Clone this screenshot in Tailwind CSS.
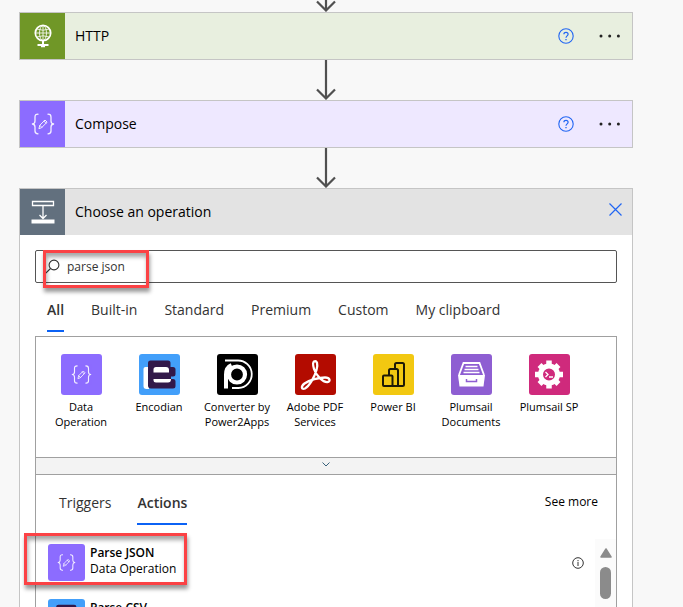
<!DOCTYPE html>
<html lang="en">
<head>
<meta charset="utf-8">
<meta name="viewport" content="width=device-width, initial-scale=1">
<title>Choose an operation</title>
<script src="https://cdn.jsdelivr.net/npm/@tailwindcss/browser@4"></script>
</head>
<body class="h-screen overflow-hidden bg-[#f8f8f8] font-['Open_Sans','Noto_Sans',sans-serif] text-black">
<svg class="hidden" aria-hidden="true">
  <symbol id="arrow" viewBox="0 0 22 40"><path d="M11 0V38M2 29.500l9 9 9-9" fill="none" stroke="#505050" stroke-width="2.200"/></symbol>
  <symbol id="braces" viewBox="0 0 24 24"><g fill="none" stroke="#fff" stroke-width="1.300" stroke-linejoin="round" stroke-linecap="round" opacity=".9"><path d="M7 2.200C4.600 2.200 4 3 4 5v4c0 2-.8 2.800-2.600 3C3.200 12.200 4 13 4 15v4c0 2 .6 2.800 3 2.800M17 2.200c2.400 0 3 .8 3 2.800v4c0 2 .8 2.800 2.600 3-1.800.2-2.600 1-2.600 3v4c0 2-.6 2.800-3 2.800"/><path d="M8 16.300l.8-3L14 8l2.100 2.100-5.200 5.300zM8.800 13.300l2.100 2.100M12.900 9.100l2.100 2.100" stroke-width="1"/></g></symbol>
  <symbol id="help" viewBox="0 0 16 16"><g fill="none" stroke="#2166f3"><circle cx="8" cy="8" r="7.200" stroke-width="1.100"/><path d="M5.900 6.300c0-1.300.9-2 2.100-2s2.100.7 2.100 1.900c0 1.600-2.100 1.700-2.100 3.500" stroke-width="1.200"/><path d="M8 10.900v1.300" stroke-width="1.300"/></g></symbol>
  <symbol id="dots" viewBox="0 0 22 4"><g fill="#222"><circle cx="2" cy="2" r="1.500"/><circle cx="10.700" cy="2" r="1.500"/><circle cx="19.400" cy="2" r="1.500"/></g></symbol>
  <symbol id="encodian" viewBox="0 0 41 41"><path fill="#429ffa" d="M0 0h41v41H0z"/><path fill="#fff" d="M4.500 15q0-2 2-2H10v22H7.500q-3 0-3-3z"/><path fill="#32194a" d="M9 9q0-2.500 2.500-2.500H29q2.500 0 2.500 2.500v4H34q2.500 0 2.500 2.500V20q0 2.500-2.500 2.500h-2V25h2q2.500 0 2.500 2.500V32q0 2.500-2.500 2.500H12q-3 0-3-3z"/><path fill="#fff" d="M14.500 15.500q0-2.500 2.500-2.500h10q3 0 3 3v2.500H14.500zM14.500 25H32q0 3.500-3 3.500H17q-2.500 0-2.500-2.500z"/></symbol>
</svg>

<main class="flex flex-col pl-[19px] pr-[50px]">
  <div class="flex h-3 items-end justify-center overflow-hidden"><svg class="h-10 w-[22px] shrink-0"><use href="#arrow"/></svg></div>

  <section class="flex h-12 items-center border border-[#c5c5c5] bg-[#e8efdf]">
    <div class="flex h-full w-[45px] items-center justify-center bg-[#709727]">
      <svg class="h-6 w-5" viewBox="0 0 20 24" fill="none" stroke="#fff" aria-hidden="true"><circle cx="10" cy="9" r="7.700" stroke-width="1.700"/><g stroke-width="1" opacity=".85"><ellipse cx="10" cy="9" rx="3.500" ry="7.500"/><path d="M10 1.500v15M2.500 9h15M4 5q6 2.500 12 0M4 13q6-2.500 12 0"/></g><path d="M10 17v3" stroke-width="2"/><path d="M4.500 21h11" stroke-width="2"/><path d="M8 22.500h4" stroke-width="1.500"/></svg>
    </div>
    <h2 class="flex-1 pl-[10px] text-sm">HTTP</h2>
    <button class="mr-[25px]" aria-label="Help for HTTP"><svg class="size-4"><use href="#help"/></svg></button>
    <button class="mr-[11px]" aria-label="HTTP menu"><svg class="h-1 w-[22px]"><use href="#dots"/></svg></button>
  </section>

  <div class="flex h-10 justify-center"><svg class="h-10 w-[22px]"><use href="#arrow"/></svg></div>

  <section class="flex h-12 items-center border border-[#c5c5c5] bg-[#eee8ff]">
    <div class="flex h-full w-[45px] items-center justify-center bg-[#8c6cff]"><svg class="size-6"><use href="#braces"/></svg></div>
    <h2 class="flex-1 pl-[10px] text-sm">Compose</h2>
    <button class="mr-[25px]" aria-label="Help for Compose"><svg class="size-4"><use href="#help"/></svg></button>
    <button class="mr-[11px]" aria-label="Compose menu"><svg class="h-1 w-[22px]"><use href="#dots"/></svg></button>
  </section>

  <div class="flex h-10 justify-center"><svg class="h-10 w-[22px]"><use href="#arrow"/></svg></div>

  <section class="border border-[#c5c5c5] bg-white">
    <header class="flex h-[46px] items-center bg-[#e3e3e3]">
      <div class="flex h-full w-[45px] items-center justify-center bg-[#62707e]">
        <svg class="size-6" viewBox="0 0 24 24" fill="none" stroke="#fff" aria-hidden="true"><path d="M1.500 1.500h21v4h-21z" stroke-width="1.300"/><path d="M12 6v12M8.500 15l3.500 3.500 3.500-3.500" stroke-width="1.300"/><path d="M.5 19.500h23v4H.5z" fill="#fff" stroke="none"/></svg>
      </div>
      <h2 class="flex-1 pl-[10px] text-sm">Choose an operation</h2>
      <button class="mr-[10px] pb-[6px]" aria-label="Close"><svg class="size-[13px]" viewBox="0 0 13 13" fill="none" stroke="#2166f3" stroke-width="1.200"><path d="M.5.5l12 12M12.500.5l-12 12"/></svg></button>
    </header>

    <div class="px-[15px] pt-[15px]">
      <div class="relative">
        <label class="flex h-[33px] items-center rounded-xs border border-[#555] bg-white pl-[9px]">
          <svg class="size-[15px] shrink-0" viewBox="0 0 15 15" fill="none" stroke="#333" stroke-width="1.100" aria-hidden="true"><circle cx="9" cy="6" r="4.900"/><path d="M5.500 9.500L.8 14.200"/></svg>
          <input type="text" aria-label="Search connectors and actions" value="parse json" class="min-w-0 flex-1 px-[7px] text-xs text-[#333] outline-none">
        </label>
        <div class="pointer-events-none absolute top-0 left-2 h-[38px] w-[106px] border-3 border-[#fb4245] shadow-[1px_4px_4px_rgba(0,0,0,0.4),inset_1px_4px_4px_rgba(0,0,0,0.35)]"></div>
      </div>

      <nav class="flex h-[49px] gap-[27px] pl-3 text-sm text-[#333]" aria-label="Connector categories">
        <a href="#all" class="border-b-2 border-[#0b62f5] pt-[17px] font-semibold">All</a>
        <a href="#builtin" class="pt-[17px]">Built-in</a>
        <a href="#standard" class="pt-[17px]">Standard</a>
        <a href="#premium" class="pt-[17px]">Premium</a>
        <a href="#custom" class="pt-[17px]">Custom</a>
        <a href="#clipboard" class="pt-[17px]">My clipboard</a>
      </nav>

      <div class="mt-1 border border-[#a0a0a0]">
        <div class="flex h-[120px] overflow-hidden pt-[17px] pl-[6px] text-center text-[11px] leading-[15px]">
          <button class="flex w-[78px] flex-col items-center">
            <svg class="mb-1 size-[41px] rounded-[3px] bg-[#8c6cff]" viewBox="0 0 41 41"><use href="#braces" x="10" y="10" width="21" height="21"/></svg>Data<br>Operation
          </button>
          <button class="flex w-[78px] flex-col items-center">
            <svg class="mb-1 size-[41px] rounded-[3px]"><use href="#encodian"/></svg>Encodian
          </button>
          <button class="flex w-[78px] flex-col items-center">
            <svg class="mb-1 size-[41px] rounded-[3px] bg-black" viewBox="0 0 41 41" fill="none" stroke="#fff"><circle cx="20" cy="20.500" r="8" stroke-width="4.200"/><path d="M9 34.500V20.500C9 16 11 12.500 14.500 11" stroke-width="4"/><path d="M8 6.500h12.500a13.500 13.500 0 0 1 1 27.500H15" stroke-width="1.800"/></svg>Converter by<br>Power2Apps
          </button>
          <button class="flex w-[78px] flex-col items-center">
            <svg class="mb-1 size-[41px] rounded-[3px] bg-[#b30b00]" viewBox="0 0 41 41"><path d="M19 7.500c3-1.500 4.200 2.500 2.500 8.500C19.500 23 14.500 32 10 34.500c-3.500 1.500-4.500-2-.5-5 5-3.500 14.500-6 20.500-6 5 0 6 4 2.500 4.500-4.500.5-11.500-6.500-13.500-13-1-3.500-1.500-6.500 0-7.500z" fill="none" stroke="#fff" stroke-width="2.300"/></svg>Adobe PDF<br>Services
          </button>
          <button class="flex w-[78px] flex-col items-center">
            <svg class="mb-1 size-[41px] rounded-[3px] bg-[#f2c811]" viewBox="0 0 41 41" fill="none" stroke="#1d1a06" stroke-width="2" stroke-linejoin="round"><rect x="10" y="21.500" width="9.500" height="10.500" rx="1"/><path d="M16 21v-4.500q0-1.500 1.500-1.500h6q1.500 0 1.500 1.500V32h-6M22 15v-4.500q0-1.500 1.500-1.500h6q1.500 0 1.500 1.500v20q0 1.500-1.500 1.500H25"/></svg>Power BI
          </button>
          <button class="flex w-[78px] flex-col items-center">
            <svg class="mb-1 size-[41px] rounded-[3px] bg-[#8e5ed2]" viewBox="0 0 41 41" fill="none" stroke="#fff"><path d="M8 21l4.500-12h16L33 21" stroke-width="1.800"/><path d="M14.500 12.500h12M13.500 15.500h14M12.500 18.500h16" stroke-width="1.400"/><path d="M7 21h27l-1.500 11.500h-24z" fill="#fff" stroke="none"/><path d="M15.500 25v2.500h10V25" stroke="#8e5ed2" stroke-width="1.500"/></svg>Plumsail<br>Documents
          </button>
          <button class="flex w-[78px] flex-col items-center">
            <svg class="mb-1 size-[41px] rounded-[3px] bg-[#cf2a7c]" viewBox="0 0 41 41"><circle cx="20" cy="20.500" r="8.500" fill="none" stroke="#fff" stroke-width="5"/><g stroke="#fff" stroke-width="5.500"><path d="M20 6.500v5M20 29.500v5M6 20.500h5M29 20.500h5M10.500 11l3.500 3.500M26 26.500l3.500 3.500M29.500 11L26 14.500M14 26.500L10.500 30"/></g><path d="M16.500 18l2.500 2.500-2.500 2.500M20 23h4" fill="none" stroke="#fff" stroke-width="1.300"/></svg>Plumsail SP
          </button>
        </div>

        <button class="flex h-[18px] w-full items-center justify-center border-y border-[#a0a0a0] bg-[#f3f3f3]" aria-label="Show more connectors"><svg class="mb-1 h-[5px] w-2" viewBox="0 0 8 5" fill="none" stroke="#38627c"><path d="M.5.5L4 4 7.500.5"/></svg></button>

        <div class="flex h-[50px] items-stretch pr-[18px] pl-[23px] text-sm text-[#333]">
          <div class="flex flex-1 gap-[26px]" role="tablist">
            <button role="tab" aria-selected="false" class="border-b-2 border-transparent pt-2">Triggers</button>
            <button role="tab" aria-selected="true" class="border-b-2 border-[#0b62f5] pt-2 font-semibold">Actions</button>
          </div>
          <a href="#more" class="pt-[19px] text-xs text-black">See more</a>
        </div>

        <div class="relative mt-[14px] flex h-[110px] text-xs leading-4">
          <ul class="flex-1 pl-3">
            <li class="flex h-[55px] items-start pt-[5px]">
              <svg class="size-[37px] rounded-[3px] bg-[#8c6cff]" viewBox="0 0 37 37"><use href="#braces" x="9" y="9" width="19" height="19"/></svg>
              <div class="flex-1 pt-px pl-[5px]"><p class="font-semibold">Parse JSON</p><p>Data Operation</p></div>
              <button class="mt-[13px] mr-[11px]" aria-label="About Parse JSON"><svg class="size-3" viewBox="0 0 12 12" fill="none" stroke="#333"><circle cx="6" cy="6" r="5.300"/><path d="M6 5v4M6 3v1.200"/></svg></button>
            </li>
            <li class="flex h-[55px] items-start pt-[5px]">
              <svg class="size-[37px] rounded-[3px]"><use href="#encodian"/></svg>
              <div class="flex-1 pt-px pl-[5px]"><p class="font-semibold">Parse CSV</p><p>Encodian</p></div>
            </li>
          </ul>
          <div class="flex w-[21px] flex-col items-center bg-[#fbfbfb] pt-[9px]" aria-hidden="true">
            <svg class="h-[10px] w-3" viewBox="0 0 12 10"><path d="M6 1L11 9H1z" fill="#8b8b8b" stroke="#8b8b8b" stroke-width="1.500" stroke-linejoin="round"/></svg>
            <div class="mt-[9px] h-8 w-[11px] rounded-full bg-[#8b8b8b]"></div>
          </div>
          <div class="pointer-events-none absolute -top-[6px] -left-3 h-[52px] w-[163px] border-3 border-[#fb4245] shadow-[1px_4px_4px_rgba(0,0,0,0.4),inset_1px_4px_4px_rgba(0,0,0,0.35)]"></div>
        </div>
      </div>
    </div>
  </section>
</main>
</body>
</html>
